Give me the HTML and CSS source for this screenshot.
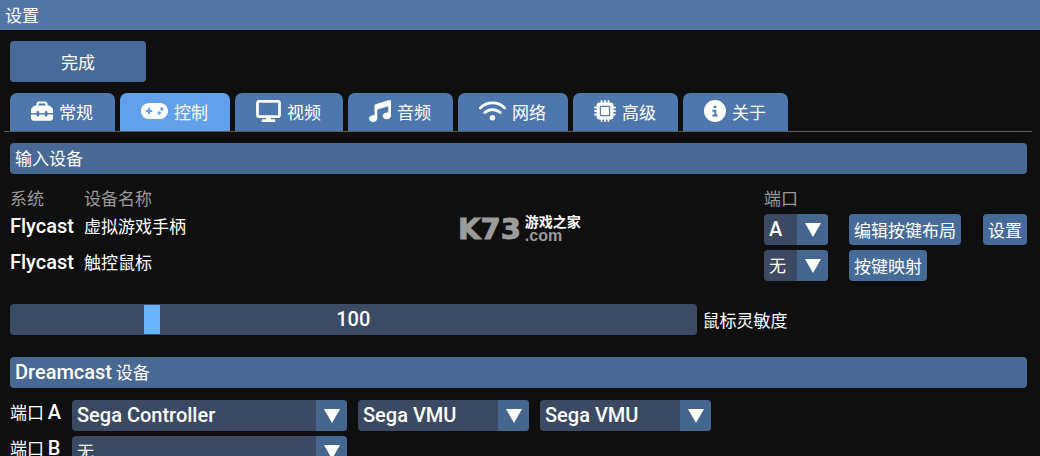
FILE: index.html
```html
<!DOCTYPE html>
<html lang="zh-CN">
<head>
    <meta charset="UTF-8">
    <meta name="viewport" content="width=device-width, initial-scale=1.0">
    <title>设置</title>
    <link rel="stylesheet" href="styles.css">
</head>
<body>

<header class="title-bar">设置</header>

<main>
    <button type="button" class="button done">完成</button>

    <!-- Tabs -->
    <nav class="tabs">
        <button type="button" class="tab">
            <svg class="icon" viewBox="0 0 512 512"><path d="M176 88v40H336V88c0-4.400-3.600-8-8-8H184c-4.400 0-8 3.600-8 8zm-48 40V88c0-30.900 25.100-56 56-56H328c30.900 0 56 25.100 56 56v40h28.100c12.700 0 24.900 5.100 33.900 14.100l51.900 51.900c9 9 14.100 21.200 14.100 33.900V304H384V288c0-17.700-14.300-32-32-32s-32 14.300-32 32v16H192V288c0-17.700-14.300-32-32-32s-32 14.300-32 32v16H0V227.900c0-12.700 5.100-24.900 14.100-33.900l51.900-51.900c9-9 21.200-14.100 33.900-14.100H128zM0 416V336H128v16c0 17.700 14.300 32 32 32s32-14.300 32-32V336H320v16c0 17.700 14.300 32 32 32s32-14.300 32-32V336H512v80c0 35.300-28.700 64-64 64H64c-35.300 0-64-28.700-64-64z"/></svg>
            <span>常规</span>
        </button>
        <button type="button" class="tab active">
            <svg class="icon wide" viewBox="0 0 640 512"><path d="M192 64C86 64 0 150 0 256S86 448 192 448H448c106 0 192-86 192-192s-86-192-192-192H192zM496 168a40 40 0 1 1 0 80 40 40 0 1 1 0-80zM392 304a40 40 0 1 1 80 0 40 40 0 1 1-80 0zM168 200c0-13.300 10.700-24 24-24s24 10.700 24 24v32h32c13.300 0 24 10.700 24 24s-10.700 24-24 24H216v32c0 13.300-10.700 24-24 24s-24-10.700-24-24V280H136c-13.300 0-24-10.700-24-24s10.700-24 24-24h32V200z"/></svg>
            <span>控制</span>
        </button>
        <button type="button" class="tab">
            <svg class="icon medium" viewBox="0 0 576 512"><path d="M64 0C28.700 0 0 28.700 0 64V352c0 35.300 28.700 64 64 64H240l-10.700 32H160c-17.700 0-32 14.300-32 32s14.300 32 32 32H416c17.700 0 32-14.300 32-32s-14.300-32-32-32H346.700L336 416H512c35.300 0 64-28.700 64-64V64c0-35.300-28.700-64-64-64H64zM512 64V352H64V64H512z"/></svg>
            <span>视频</span>
        </button>
        <button type="button" class="tab">
            <svg class="icon" viewBox="0 0 512 512"><path d="M499.100 6.300c8.100 6 12.900 15.600 12.900 25.700v336c0 44.200-43 80-96 80s-96-35.800-96-80s43-80 96-80c11.200 0 22 1.600 32 4.600V147L192 223.800V432c0 44.200-43 80-96 80s-96-35.800-96-80s43-80 96-80c11.200 0 22 1.600 32 4.600V128c0-14.100 9.300-26.600 22.800-30.700l320-96c9.700-2.900 20.200-1.100 28.300 5z"/></svg>
            <span>音频</span>
        </button>
        <button type="button" class="tab">
            <svg class="icon wide" viewBox="0 0 640 512">
                <path class="stroke" d="M32 184C190 26 450 26 608 184M138 294C239 198 401 198 502 294"/>
                <circle cx="320" cy="416" r="64"/>
            </svg>
            <span>网络</span>
        </button>
        <button type="button" class="tab">
            <svg class="icon" viewBox="0 0 512 512">
                <path class="pins" d="M176 24v464M256 24v48M256 440v48M336 24v464M24 176h464M24 256h48M440 256h48M24 336h464"/>
                <rect x="60" y="60" width="392" height="392" rx="64"/>
                <rect class="die" x="148" y="148" width="216" height="216" rx="12"/>
            </svg>
            <span>高级</span>
        </button>
        <button type="button" class="tab">
            <svg class="icon" viewBox="0 0 512 512"><path d="M256 512A256 256 0 1 0 256 0a256 256 0 1 0 0 512zM216 336h24V272H216c-13.300 0-24-10.700-24-24s10.700-24 24-24h48c13.300 0 24 10.700 24 24v88h8c13.300 0 24 10.700 24 24s-10.700 24-24 24H216c-13.300 0-24-10.700-24-24s10.700-24 24-24zm40-208a32 32 0 1 1 0 64 32 32 0 1 1 0-64z"/></svg>
            <span>关于</span>
        </button>
    </nav>

    <!-- Input devices -->
    <h2 class="section-title">输入设备</h2>
    <table class="devices">
        <thead>
            <tr>
                <th class="col-system">系统</th>
                <th>设备名称</th>
                <th class="col-port">端口</th>
                <th class="col-mapping"></th>
                <th class="col-settings"></th>
            </tr>
        </thead>
        <tbody>
            <tr>
                <td class="latin">Flycast</td>
                <td>虚拟游戏手柄</td>
                <td>
                    <div class="combo combo-port">
                        <select class="latin" aria-label="虚拟游戏手柄端口"><option>A</option></select>
                    </div>
                </td>
                <td><button type="button" class="button">编辑按键布局</button></td>
                <td><button type="button" class="button">设置</button></td>
            </tr>
            <tr>
                <td class="latin">Flycast</td>
                <td>触控鼠标</td>
                <td>
                    <div class="combo combo-port">
                        <select aria-label="触控鼠标端口"><option>无</option></select>
                    </div>
                </td>
                <td><button type="button" class="button">按键映射</button></td>
                <td></td>
            </tr>
        </tbody>
    </table>

    <!-- Mouse sensitivity -->
    <div class="slider-row">
        <div class="slider">
            <input type="range" id="sensitivity" min="1" max="500" value="100">
            <output class="latin" id="sensitivityValue" for="sensitivity">100</output>
        </div>
        <label for="sensitivity">鼠标灵敏度</label>
    </div>

    <!-- Dreamcast devices -->
    <h2 class="section-title"><span class="latin">Dreamcast</span> 设备</h2>
    <div class="port-row">
        <label for="portA">端口 <span class="latin">A</span></label>
        <div class="combo combo-device">
            <select class="latin" id="portA"><option>Sega Controller</option></select>
        </div>
        <div class="combo combo-slot">
            <select class="latin" aria-label="端口 A 插槽 1"><option>Sega VMU</option></select>
        </div>
        <div class="combo combo-slot">
            <select class="latin" aria-label="端口 A 插槽 2"><option>Sega VMU</option></select>
        </div>
    </div>
    <div class="port-row">
        <label for="portB">端口 <span class="latin">B</span></label>
        <div class="combo combo-device">
            <select id="portB"><option>无</option></select>
        </div>
    </div>
</main>

<div class="watermark">
    <span class="mark">K73</span>
    <span class="site"><b>游戏之家</b><i>.com</i></span>
</div>

<script>
const sensitivity = document.getElementById('sensitivity');

sensitivity.addEventListener('input', function () {
    document.getElementById('sensitivityValue').textContent = sensitivity.value;
});
</script>

</body>
</html>
```
FILE: styles.css
```css
* {
    box-sizing: border-box;
}
body {
    margin: 0;
    height: 100vh;
    overflow: hidden;
    position: relative;
    background-color: #0f0f0f;
    color: #fff;
    font-family: "Noto Sans CJK SC", sans-serif;
    font-size: 17px;
    line-height: 24px;
}
button, select {
    font: inherit;
    color: inherit;
    border: none;
    margin: 0;
}
.latin {
    font-family: Roboto, "Noto Sans CJK SC", sans-serif;
    font-size: 20px;
    font-weight: 500;
}
.title-bar {
    height: 30px;
    padding: 3px 5px;
    background-color: #5276a6;
}
main {
    padding: 11px 13px 0 10px;
}
.button {
    display: block;
    height: 31px;
    padding: 0 5px;
    border-radius: 4px;
    background-color: #476b98;
    white-space: nowrap;
}
.done {
    width: 136px;
    height: 41px;
}

/* Tabs */
.tabs {
    display: flex;
    gap: 5px;
    margin: 11px -5px 11px -6px;
    padding-left: 6px;
    border-bottom: 1px solid #5a5a5e;
}
.tab {
    display: flex;
    align-items: center;
    gap: 6px;
    height: 38px;
    padding: 0 22px 0 21px;
    border-radius: 7px 7px 0 0;
    background-color: #4e77ad;
}
.tab.active {
    background-color: #62a1ea;
}
.icon {
    width: 22px;
    height: 22px;
    margin-bottom: 2px;
    fill: #fff;
}
.icon.medium {
    width: 25px;
}
.icon.wide {
    width: 27px;
}
.stroke, .pins {
    fill: none;
    stroke: #fff;
    stroke-width: 64;
    stroke-linecap: round;
}
.pins {
    stroke-width: 44;
}
.die {
    stroke: #4e77ad;
    stroke-width: 26;
}

.section-title {
    height: 31px;
    margin: 0;
    padding: 3px 5px;
    border-radius: 4px;
    background-color: #476993;
    font-size: 17px;
    font-weight: 400;
}

/* Device table */
.devices {
    width: 100%;
    margin-top: 12px;
    table-layout: fixed;
    border-collapse: collapse;
}
.devices th, .devices td {
    padding: 0;
    text-align: left;
    vertical-align: top;
}
.devices th {
    height: 28px;
    color: #9a9a9a;
    font-weight: 400;
}
.devices td {
    height: 36px;
}
.col-system {
    width: 74px;
}
.col-port {
    width: 85px;
}
.col-mapping {
    width: 134px;
}
.col-settings {
    width: 44px;
}

/* Drop-downs */
.combo {
    position: relative;
    height: 31px;
    border-radius: 4px;
    overflow: hidden;
    background-color: #3b4963;
}
.combo::before {
    content: "";
    position: absolute;
    top: 0;
    right: 0;
    width: 31px;
    height: 100%;
    background-color: #44668f;
    pointer-events: none;
}
.combo::after {
    content: "";
    position: absolute;
    top: 9px;
    right: 7px;
    border: 8px solid transparent;
    border-top: 14px solid #fff;
    border-bottom: 0;
    pointer-events: none;
}
.combo select {
    display: block;
    width: 100%;
    height: 30px;
    padding: 0 31px 0 5px;
    appearance: none;
    background: none;
}
.combo-port {
    width: 64px;
}
.combo-device {
    width: 275px;
}
.combo-slot {
    width: 171px;
}

/* Slider */
.slider-row {
    display: flex;
    align-items: center;
    gap: 6px;
    margin: 18px 0 22px;
}
.slider {
    position: relative;
    width: calc(68% - 5px);
    height: 31px;
}
.slider input {
    display: block;
    width: 100%;
    height: 31px;
    margin: 0;
    padding: 1px 2px;
    appearance: none;
    border-radius: 4px;
    background-color: #3b4a65;
}
.slider input::-webkit-slider-thumb {
    appearance: none;
    width: 16px;
    height: 29px;
    background-color: #69b3ff;
}
.slider output {
    position: absolute;
    inset: 0;
    text-align: center;
    line-height: 31px;
    pointer-events: none;
}

.port-row {
    display: flex;
    gap: 11px;
    margin-top: 5px;
}
.section-title + .port-row {
    margin-top: 12px;
}
.port-row label {
    width: 51px;
    white-space: nowrap;
}

.watermark {
    position: absolute;
    top: 214px;
    left: 458px;
    display: flex;
    gap: 4px;
    pointer-events: none;
}
.mark {
    color: #9c9c9c;
    font: bold 29px/30px "DejaVu Sans", sans-serif;
    -webkit-text-stroke: 1px #9c9c9c;
}
.site b, .site i {
    display: block;
    font-size: 14px;
    line-height: 15px;
}
.site i {
    color: #9c9c9c;
    font: bold 16px/14px "Liberation Sans", sans-serif;
}
```
